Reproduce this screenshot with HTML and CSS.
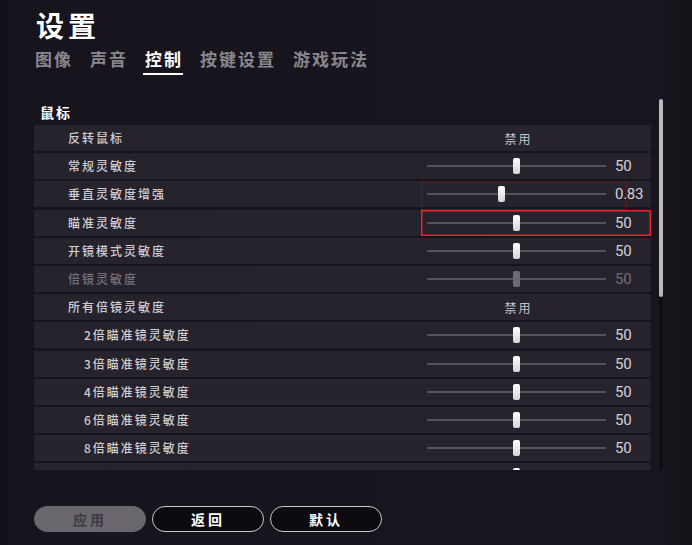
FILE: index.html
```html
<!DOCTYPE html>
<html lang="zh-CN">
<head>
    <meta charset="UTF-8">
    <meta name="viewport" content="width=device-width, initial-scale=1.0">
    <title>设置</title>
    <link rel="stylesheet" href="styles.css">
</head>
<body>
    <div class="page">
        <h1 class="title">设置</h1>
        <div class="tabs">
            <span class="tab">图像</span>
            <span class="tab">声音</span>
            <span class="tab active">控制</span>
            <span class="tab">按键设置</span>
            <span class="tab">游戏玩法</span>
        </div>

        <div class="panel">
            <div class="list">
                <div class="section">鼠标</div>

                <div class="row">
                    <div class="label">反转鼠标</div>
                    <div class="ctrl"><div class="toggle">禁用</div><div class="value"></div></div>
                </div>
                <div class="row">
                    <div class="label">常规灵敏度</div>
                    <div class="ctrl"><div class="track"><div class="thumb" style="left: 50%"></div></div><div class="value">50</div></div>
                </div>
                <div class="row">
                    <div class="label">垂直灵敏度增强</div>
                    <div class="ctrl focus"><div class="track"><div class="thumb" style="left: 41.5%"></div></div><div class="value">0.83</div></div>
                </div>
                <div class="row">
                    <div class="label">瞄准灵敏度</div>
                    <div class="ctrl selected"><div class="track"><div class="thumb" style="left: 50%"></div></div><div class="value">50</div></div>
                </div>
                <div class="row">
                    <div class="label">开镜模式灵敏度</div>
                    <div class="ctrl"><div class="track"><div class="thumb" style="left: 50%"></div></div><div class="value">50</div></div>
                </div>
                <div class="row disabled">
                    <div class="label">倍镜灵敏度</div>
                    <div class="ctrl"><div class="track"><div class="thumb" style="left: 50%"></div></div><div class="value">50</div></div>
                </div>
                <div class="row">
                    <div class="label">所有倍镜灵敏度</div>
                    <div class="ctrl"><div class="toggle">禁用</div><div class="value"></div></div>
                </div>
                <div class="row sub">
                    <div class="label">2倍瞄准镜灵敏度</div>
                    <div class="ctrl"><div class="track"><div class="thumb" style="left: 50%"></div></div><div class="value">50</div></div>
                </div>
                <div class="row sub">
                    <div class="label">3倍瞄准镜灵敏度</div>
                    <div class="ctrl"><div class="track"><div class="thumb" style="left: 50%"></div></div><div class="value">50</div></div>
                </div>
                <div class="row sub">
                    <div class="label">4倍瞄准镜灵敏度</div>
                    <div class="ctrl"><div class="track"><div class="thumb" style="left: 50%"></div></div><div class="value">50</div></div>
                </div>
                <div class="row sub">
                    <div class="label">6倍瞄准镜灵敏度</div>
                    <div class="ctrl"><div class="track"><div class="thumb" style="left: 50%"></div></div><div class="value">50</div></div>
                </div>
                <div class="row sub">
                    <div class="label">8倍瞄准镜灵敏度</div>
                    <div class="ctrl"><div class="track"><div class="thumb" style="left: 50%"></div></div><div class="value">50</div></div>
                </div>
                <div class="row sub">
                    <div class="label">15倍瞄准镜灵敏度</div>
                    <div class="ctrl"><div class="track"><div class="thumb" style="left: 50%"></div></div><div class="value">50</div></div>
                </div>
            </div>
            <div class="scrollbar"><div class="scroll-thumb"></div></div>
        </div>

        <div class="buttons">
            <button class="btn apply">应用</button>
            <button class="btn">返回</button>
            <button class="btn">默认</button>
        </div>
    </div>
</body>
</html>
```

FILE: styles.css
```css
body {
    margin: 0;
    background-color: #16121b;
    font-family: "Noto Sans CJK SC", "Noto Sans", sans-serif;
    color: #d0ced4;
}
.page {
    width: 692px;
    height: 545px;
    overflow: hidden;
    background: linear-gradient(90deg, #141019 0px, #18141d 16px, #19151e 660px, #151119 692px);
}
.title {
    margin: 0;
    padding: 8px 0 0 36px;
    font-size: 28px;
    line-height: 34px;
    font-weight: bold;
    letter-spacing: 4px;
    color: #ffffff;
}
.tabs {
    display: flex;
    gap: 17px;
    padding-left: 35px;
    margin-top: 7px;
}
.tab {
    font-size: 17px;
    line-height: 20px;
    font-weight: bold;
    letter-spacing: 2px;
    color: #89878e;
    padding-bottom: 4px;
}
.tab.active {
    color: #ffffff;
    border-bottom: 2px solid #ffffff;
    margin-left: -2px;
    padding-left: 2px;
}
.panel {
    display: flex;
    align-items: flex-start;
    margin-top: 24px;
    padding-left: 34px;
}
.list {
    width: 617px;
    height: 371px;
    overflow: hidden;
}
.section {
    height: 26px;
    padding-left: 6px;
    padding-top: 4px;
    box-sizing: border-box;
    font-size: 14px;
    line-height: 18px;
    font-weight: bold;
    letter-spacing: 2px;
    color: #ffffff;
}
.row {
    display: flex;
    align-items: stretch;
    height: 26px;
    margin-bottom: 2.2px;
    background-color: #26232d;
}
.label {
    flex: 1;
    padding-left: 34px;
    font-size: 12px;
    line-height: 26px;
    font-weight: 500;
    letter-spacing: 2px;
    color: #cfcdd3;
}
.row.sub .label {
    padding-left: 50px;
}
.row.disabled .label {
    color: #75727a;
}
.ctrl {
    position: relative;
    display: flex;
    align-items: center;
    width: 224px;
    padding-left: 6px;
}
.ctrl.selected {
    box-shadow: inset 0 0 0 1.5px #e3262f;
}
.ctrl.focus::after {
    content: "";
    position: absolute;
    left: 0;
    top: 1px;
    width: 206px;
    height: 28px;
    border: 1px solid #5e1a23;
    box-sizing: border-box;
}
.track {
    position: relative;
    width: 179px;
    height: 2px;
    background-color: #55525b;
}
.thumb {
    position: absolute;
    top: -7px;
    width: 7px;
    height: 16px;
    margin-left: -3.5px;
    border-radius: 2px;
    background: linear-gradient(180deg, #ffffff, #d4d3d8);
}
.row.disabled .thumb {
    background: #6d6b72;
}
.toggle {
    width: 179px;
    text-align: center;
    font-size: 12px;
    letter-spacing: 2px;
    color: #c6c4ca;
    padding-left: 2px;
}
.value {
    margin-left: 9px;
    font-family: Roboto, "Liberation Sans", sans-serif;
    font-size: 15px;
    letter-spacing: -0.3px;
    color: #d4d2d8;
    white-space: nowrap;
}
.row.disabled .value {
    color: #6f6c74;
}
.scrollbar {
    width: 4px;
    height: 371px;
    margin-left: 8px;
    background-color: #0f0d12;
    border-radius: 2px;
}
.scroll-thumb {
    height: 198px;
    border-radius: 2px;
    background-color: #b9b8bd;
}
.buttons {
    display: flex;
    gap: 6px;
    padding-left: 34px;
    margin-top: 36px;
}
.btn {
    width: 112px;
    height: 26px;
    border-radius: 13px;
    border: 1.5px solid #c9c7cd;
    background-color: #0d0b10;
    color: #ffffff;
    font-family: "Noto Sans CJK SC", sans-serif;
    font-size: 14px;
    font-weight: bold;
    letter-spacing: 3px;
    padding: 0;
}
.btn.apply {
    background-color: #69666e;
    border-color: #69666e;
    color: #3d3a42;
}
```
